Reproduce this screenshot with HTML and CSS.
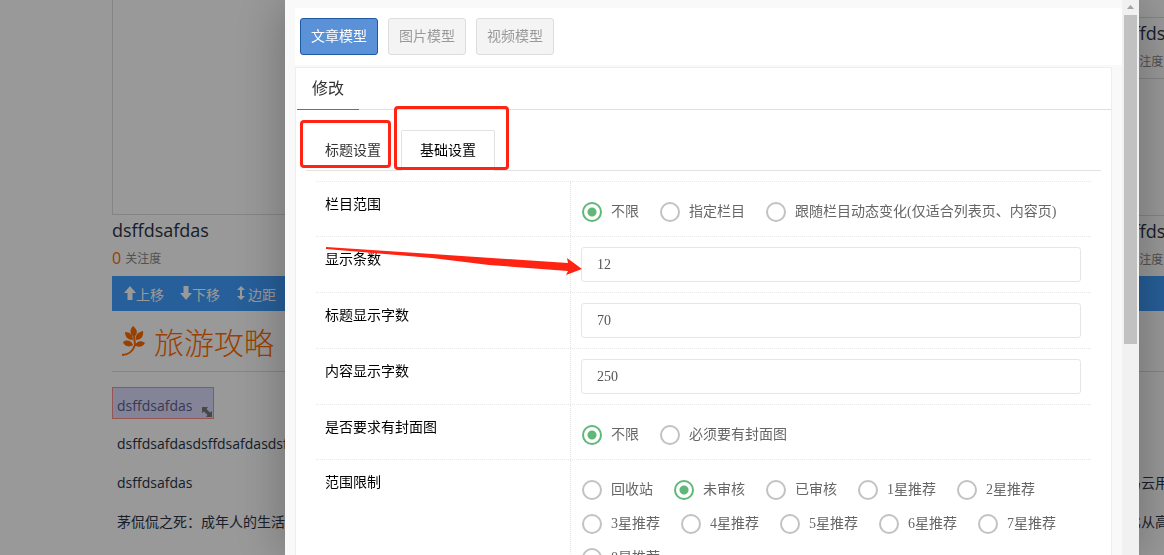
FILE: index.html
```html
<!DOCTYPE html>
<html lang="zh-CN">
<head>
    <meta charset="UTF-8">
    <meta name="viewport" content="width=device-width, initial-scale=1.0">
    <title>修改</title>
    <link rel="stylesheet" href="styles.css">
</head>
<body>
<div class="page">
    <div class="columns">
        <div class="column-main">
            <div class="photo photo-main"></div>
            <div class="card-title">dsffdsafdas</div>
            <div class="card-meta"><span class="count">0</span>关注度</div>
        </div>
        <div class="column-side">
            <div class="photo photo-top"></div>
            <div class="card-title">dsffdsafdas</div>
            <div class="card-meta"><span class="count">0</span>关注度</div>
            <div class="photo photo-side"></div>
            <div class="card-title">dsffdsafdas</div>
            <div class="card-meta"><span class="count">0</span>关注度</div>
        </div>
    </div>

    <div class="toolbar">
        <a href="#"><svg width="12" height="14" viewBox="0 0 12 14"><path d="M6 0L12 7H8.500V14H3.500V7H0Z"/></svg>上移</a>
        <a href="#"><svg width="12" height="14" viewBox="0 0 12 14"><path d="M6 14L0 7H3.500V0H8.500V7H12Z"/></svg>下移</a>
        <a href="#"><svg width="12" height="14" viewBox="0 0 12 14"><path d="M5 0L9 4H6V10H9L5 14L1 10H4V4H1Z"/></svg>边距</a>
    </div>

    <div class="section-head">
        <svg width="26" height="32" viewBox="0 0 26 32">
            <path d="M12 1C17 5 17 9 13 12C9 10 8 5 12 1Z"/>
            <path d="M4 7C9 7 12 10 12 15C7 15 4 12 4 7Z"/>
            <path d="M22 6C23 11 20 15 15 15C14 10 17 7 22 6Z"/>
            <path d="M2 17C6 14 11 16 12 20C8 23 3 21 2 17Z"/>
            <path d="M24 18C22 22 17 23 14 20C16 16 20 15 24 18Z"/>
            <path class="stem" d="M13 10L14 20C12 26 7 30 1 30"/>
        </svg>
        旅游攻略
    </div>

    <div class="columns news">
        <ul class="column-main">
            <li class="selected">dsffdsafdas
                <svg class="resize" width="10" height="10" viewBox="0 0 10 10"><path d="M0 0H6L4.500 2L8 5.500L10 4V10H4L5.500 8L2 4.500L0 6Z"/></svg>
            </li>
            <li>dsffdsafdasdsffdsafdasdsffdsafdas</li>
            <li>dsffdsafdas</li>
            <li>茅侃侃之死：成年人的生活</li>
        </ul>
        <ul class="column-side">
            <li></li>
            <li></li>
            <li>马云用</li>
            <li>比从高</li>
        </ul>
    </div>
</div>

<div class="shade"></div>

<div class="dialog">
    <div class="dialog-body">
        <div class="models">
            <button type="button" class="active">文章模型</button>
            <button type="button">图片模型</button>
            <button type="button">视频模型</button>
        </div>

        <div class="panel">
            <div class="panel-head"><span>修改</span></div>
            <div class="tabs">
                <a href="#">标题设置</a>
                <a href="#" class="active">基础设置</a>
            </div>

            <form class="settings">
                <div class="row">
                    <div class="row-name" id="scope">栏目范围</div>
                    <div class="row-value radios" role="radiogroup" aria-labelledby="scope">
                        <label><input type="radio" name="scope" checked>不限</label>
                        <label><input type="radio" name="scope">指定栏目</label>
                        <label><input type="radio" name="scope">跟随栏目动态变化(仅适合列表页、内容页)</label>
                    </div>
                </div>
                <div class="row">
                    <label class="row-name" for="rows">显示条数</label>
                    <div class="row-value"><input type="text" id="rows" value="12"></div>
                </div>
                <div class="row">
                    <label class="row-name" for="titleLength">标题显示字数</label>
                    <div class="row-value"><input type="text" id="titleLength" value="70"></div>
                </div>
                <div class="row">
                    <label class="row-name" for="contentLength">内容显示字数</label>
                    <div class="row-value"><input type="text" id="contentLength" value="250"></div>
                </div>
                <div class="row">
                    <div class="row-name" id="cover">是否要求有封面图</div>
                    <div class="row-value radios" role="radiogroup" aria-labelledby="cover">
                        <label><input type="radio" name="cover" checked>不限</label>
                        <label><input type="radio" name="cover">必须要有封面图</label>
                    </div>
                </div>
                <div class="row">
                    <div class="row-name" id="limit">范围限制</div>
                    <div class="row-value radios" role="radiogroup" aria-labelledby="limit">
                        <label><input type="radio" name="limit">回收站</label>
                        <label><input type="radio" name="limit" checked>未审核</label>
                        <label><input type="radio" name="limit">已审核</label>
                        <label><input type="radio" name="limit">1星推荐</label>
                        <label><input type="radio" name="limit">2星推荐</label>
                        <label><input type="radio" name="limit">3星推荐</label>
                        <label><input type="radio" name="limit">4星推荐</label>
                        <label><input type="radio" name="limit">5星推荐</label>
                        <label><input type="radio" name="limit">6星推荐</label>
                        <label><input type="radio" name="limit">7星推荐</label>
                        <label><input type="radio" name="limit">8星推荐</label>
                    </div>
                </div>
            </form>
        </div>
    </div>

    <div class="scrollbar">
        <svg width="17" height="15" viewBox="0 0 17 15"><path d="M8.500 5L12 9H5Z"/></svg>
        <div class="thumb"></div>
    </div>

    <!-- red marks over the tabs and the field -->
    <div class="mark mark-title"></div>
    <div class="mark mark-basic"></div>
    <svg class="arrow" width="258" height="30" viewBox="0 0 258 30"><path d="M1 0L107 7L243 16L242 11L257 22L241 28L243 24L164 18L107 11L1 2Z"/></svg>
</div>
</body>
</html>
```
FILE: styles.css
```css
* {
    box-sizing: border-box;
}

body {
    margin: 0;
    height: 100vh;
    overflow: hidden;
    background: #fff;
    color: #333;
    font-family: "Open Sans", "Noto Sans CJK SC", sans-serif;
    font-size: 14px;
}

a {
    color: inherit;
    text-decoration: none;
}

ul {
    margin: 0;
    padding: 0;
    list-style: none;
}

/* page behind the dialog */
.page {
    padding-left: 112px;
    overflow: hidden;
}

.columns {
    display: flex;
}

.column-main {
    flex: 0 0 1002px;
}

.column-side {
    flex: 1;
    min-width: 0;
    white-space: nowrap;
}

.photo {
    border: 1px solid #ddd;
    border-top: 0;
}

.column-side .photo {
    border-right: 0;
}

.photo-main {
    height: 215px;
    width: 334px;
}

.photo-top {
    height: 18px;
}

.photo-side {
    height: 138px;
    border-top: 1px solid #ddd;
}

.card-title {
    height: 31px;
    line-height: 30px;
    font-size: 18px;
    color: #2b3345;
}

.card-meta {
    display: flex;
    align-items: center;
    gap: 4px;
    height: 29px;
    padding-bottom: 5px;
    font-size: 12px;
    color: #888;
}

.card-meta .count {
    font-size: 16px;
    color: #ff6a00;
}

.toolbar {
    display: flex;
    gap: 16px;
    height: 35px;
    padding-left: 12px;
    background: #409eff;
    color: #fff;
    line-height: 37px;
}

.toolbar svg {
    fill: currentColor;
}

.section-head {
    display: flex;
    align-items: center;
    gap: 7px;
    height: 61px;
    padding-left: 9px;
    border-bottom: 1px solid #ddd;
    color: #ff6a00;
    font-size: 30px;
    font-weight: 300;
}

.section-head svg {
    fill: currentColor;
}

.section-head .stem {
    fill: none;
    stroke: currentColor;
    stroke-width: 2;
}

.news {
    padding-top: 15px;
}

.news li {
    position: relative;
    height: 32px;
    margin-bottom: 7px;
    padding-left: 5px;
    line-height: 35px;
    color: #2b3345;
}

.news .column-side li {
    padding-left: 13px;
}

.news .selected {
    width: 102px;
    padding-left: 4px;
    border: 1px solid #ff8b8b;
    background: #dcdcff;
    color: #5f5f8c;
}

.resize {
    position: absolute;
    right: 1px;
    bottom: 1px;
    fill: #777;
}

.shade {
    position: fixed;
    inset: 0;
    background: rgba(0, 0, 0, 0.4);
}

/* dialog */
.dialog {
    position: fixed;
    top: 0;
    bottom: 0;
    left: 285px;
    right: 25px;
    display: flex;
    background: #f9f9f9;
    box-shadow: 1px 1px 50px rgba(0, 0, 0, 0.3);
    font-family: "Liberation Serif", "Noto Sans CJK SC", sans-serif;
}

.dialog-body {
    flex: 1;
    min-width: 0;
    padding: 8px 0 0 10px;
    overflow: hidden;
}

.models {
    display: flex;
    gap: 10px;
    padding: 10px 5px;
    background: #fff;
}

.models button {
    height: 37px;
    padding: 0 10px 3px;
    border: 1px solid #ddd;
    border-radius: 3px;
    background: #f4f4f4;
    color: #999;
    font-family: inherit;
    font-size: 14px;
}

.models button.active {
    border-color: #1f5aa5;
    background: #5b91d7;
    color: #fff;
}

.panel {
    margin: 2px 10px 0 0;
    border: 1px solid #eee;
    background: #fff;
}

.panel-head {
    display: flex;
    margin-left: 1px;
    border-bottom: 1px solid #dcdfe6;
    font-size: 16px;
}

.panel-head span {
    height: 42px;
    margin-bottom: -1px;
    padding: 0 15px;
    border-bottom: 1px solid #2b7de0;
    line-height: 41px;
}

.tabs {
    display: flex;
    gap: 1px;
    height: 41px;
    margin: 20px 10px 0;
    border-bottom: 1px solid #e2e2e2;
    line-height: 39px;
}

.tabs a {
    height: 41px;
    padding: 0 18px;
    border: 1px solid transparent;
    border-bottom: 0;
}

.tabs .active {
    border-color: #e2e2e2;
    border-radius: 2px 2px 0 0;
    background: #fff;
    color: #000;
}

.settings {
    margin: 10px 20px 0;
    border-top: 1px dotted #e8e8e8;
}

.row {
    display: flex;
    border-bottom: 1px dotted #e8e8e8;
}

.row-name {
    flex: 0 0 254px;
    padding: 11px 9px 0;
    line-height: 24px;
    color: #000;
}

.row-value {
    flex: 1;
    min-width: 0;
    padding: 10px;
    border-left: 1px dotted #e4e4e4;
}

.row-value input[type="text"] {
    display: block;
    width: 100%;
    height: 35px;
    padding: 0 15px;
    border: 1px solid #e6e6e6;
    border-radius: 3px;
    background: #fff;
    color: #555;
    font-family: inherit;
    font-size: 14px;
}

.radios {
    display: flex;
    flex-wrap: wrap;
    padding: 10px 0 10px 11px;
    color: #666;
}

.radios label {
    display: flex;
    align-items: center;
    gap: 9px;
    height: 28px;
    margin-top: 6px;
    padding-right: 21px;
    line-height: 18px;
    white-space: nowrap;
}

.radios input {
    appearance: none;
    width: 20px;
    height: 20px;
    margin: 0;
    border: 2px solid #c2c2c2;
    border-radius: 50%;
}

.radios input:checked {
    border-color: #5fb878;
    background: radial-gradient(circle, #5fb878 4px, transparent 5px);
}

.scrollbar {
    width: 17px;
    background: #f1f1f1;
}

.scrollbar svg {
    display: block;
    fill: #a3a3a3;
}

.scrollbar .thumb {
    height: 329px;
    margin: 0 2px;
    background: #c1c1c1;
}

.mark {
    position: absolute;
    border: 3px solid #ff2314;
    border-radius: 4px;
}

.mark-title {
    left: 15px;
    top: 120px;
    width: 91px;
    height: 48px;
}

.mark-basic {
    left: 109px;
    top: 106px;
    width: 115px;
    height: 64px;
}

.arrow {
    position: absolute;
    left: 40px;
    top: 247px;
    fill: #ff2314;
}
```
